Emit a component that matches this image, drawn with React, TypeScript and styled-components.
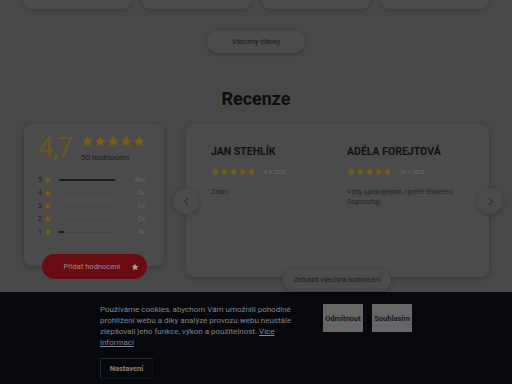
import React from 'react';
import styled, { createGlobalStyle } from 'styled-components';

const GlobalStyle = createGlobalStyle`
  body {
    margin: 0;
    background: #484848;
    font-family: Roboto, 'Liberation Sans', sans-serif;
  }
`;

const Page = styled.div`
  width: 512px;
  height: 384px;
  position: relative;
  overflow: hidden;
  background: #484848;
`;

const ArticleRow = styled.div`
  display: flex;
  gap: 11px;
  padding: 0 23px;
`;

const ArticleStub = styled.div`
  flex: 1;
  height: 9px;
  background: #4b4b4b;
  border-radius: 0 0 8px 8px;
  box-shadow: 0 1px 4px rgba(0, 0, 0, 0.22);
`;

const PillButton = styled.div`
  display: flex;
  align-items: center;
  justify-content: center;
  height: 23px;
  border-radius: 12px;
  background: #4b4b4b;
  box-shadow: 0 1px 4px rgba(0, 0, 0, 0.25);
  font-size: 7px;
  color: #1c1c1c;
`;

const AllArticles = styled(PillButton)`
  width: 98px;
  margin: 21px auto 0;
`;

const Heading = styled.h2`
  margin: 36px 0 0;
  text-align: center;
  font-size: 18px;
  font-weight: 700;
  line-height: 20px;
  color: #0e0e0e;
`;

const Reviews = styled.div`
  display: flex;
  gap: 22px;
  padding: 15px 0 0 24px;
`;

const SummaryCol = styled.div`
  width: 140px;
  display: flex;
  flex-direction: column;
  align-items: center;
`;

const Card = styled.div`
  background: #4b4b4b;
  border-radius: 8px;
  box-shadow: 0 1px 5px rgba(0, 0, 0, 0.25);
`;

const SummaryCard = styled(Card)`
  width: 100%;
  box-sizing: border-box;
  padding: 10px 19px 30px 14px;
`;

const Score = styled.div`
  display: flex;
  gap: 9px;
`;

const Big = styled.div`
  font-size: 28px;
  font-weight: 400;
  line-height: 28px;
  color: #6a5720;
  letter-spacing: -1px;
`;

const ScoreInfo = styled.div`
  display: flex;
  flex-direction: column;
  gap: 5px;
  padding-top: 1px;
`;

const Stars = styled.div<{ $size: number; $gap: number }>`
  display: flex;
  gap: ${p => p.$gap}px;
  svg {
    width: ${p => p.$size}px;
    height: ${p => p.$size}px;
  }
`;

const Count = styled.div`
  font-size: 8px;
  color: #1e1e1e;
`;

const RateList = styled.div`
  display: flex;
  flex-direction: column;
  gap: 5px;
  margin-top: 14px;
`;

const RateRow = styled.div`
  display: flex;
  align-items: center;
  height: 8px;
  font-size: 6.5px;
  color: #1a1a1a;
`;

const RateNum = styled.span`
  width: 6px;
`;

const RateStar = styled.span`
  display: flex;
  svg {
    width: 8px;
    height: 8px;
  }
`;

const Track = styled.div`
  width: 56px;
  height: 1px;
  margin-left: 7px;
  background: #434343;
`;

const Fill = styled.div`
  height: 2px;
  margin-top: -0.5px;
  background: #1c1c1c;
`;

const RateCount = styled.span`
  margin-left: auto;
  color: #6a6a6a;
`;

const AddButton = styled.div`
  width: 105px;
  height: 25px;
  margin-top: -12px;
  border-radius: 13px;
  background: #6a0b12;
  display: flex;
  align-items: center;
  justify-content: space-between;
  box-sizing: border-box;
  padding: 0 8px 0 22px;
  font-size: 7.5px;
  color: #a58a8a;
  svg {
    width: 8px;
    height: 8px;
  }
`;

const Carousel = styled(Card)`
  width: 303px;
  height: 153px;
  position: relative;
  display: flex;
  padding: 22px 0 0 25px;
  box-sizing: border-box;
`;

const Review = styled.div`
  width: 136px;
  display: flex;
  flex-direction: column;
`;

const Name = styled.div`
  font-size: 10.5px;
  font-weight: 700;
  color: #111;
  line-height: 12px;
`;

const Meta = styled.div`
  display: flex;
  align-items: center;
  gap: 8px;
  margin-top: 9px;
  font-size: 5.5px;
  color: #6e6e6e;
`;

const Body = styled.div`
  margin-top: 11px;
  font-size: 7px;
  line-height: 10px;
  color: #262626;
`;

const Arrow = styled.div<{ $side: 'left' | 'right' }>`
  position: absolute;
  top: 64px;
  ${p => (p.$side === 'left' ? 'left: -13px;' : 'right: -14px;')}
  width: 26px;
  height: 26px;
  border-radius: 50%;
  background: #4b4b4b;
  box-shadow: 0 1px 4px rgba(0, 0, 0, 0.25);
  display: flex;
  align-items: center;
  justify-content: center;
  svg {
    width: 11px;
    height: 11px;
  }
`;

const ShowAll = styled(PillButton)`
  position: absolute;
  bottom: -14px;
  left: 97px;
  width: 108px;
  height: 22px;
  border-radius: 11px;
`;

const CookieBar = styled.div`
  position: absolute;
  left: 0;
  right: 0;
  bottom: 0;
  height: 92px;
  background: #07070e;
  display: flex;
  padding: 12px 0 0 100px;
  box-sizing: border-box;
  gap: 23px;
  z-index: 2;
`;

const CookieText = styled.div`
  width: 200px;
  display: flex;
  flex-direction: column;
  align-items: flex-start;
`;

const CookieCopy = styled.p`
  margin: 0;
  font-size: 8px;
  line-height: 11px;
  color: #84848c;
`;

const MoreLink = styled.span`
  text-decoration: underline;
`;

const SettingsButton = styled.div`
  margin-top: 10px;
  width: 53px;
  height: 21px;
  border: 1px solid #26262c;
  border-right-color: #121218;
  border-bottom-color: #121218;
  box-sizing: border-box;
  display: flex;
  align-items: center;
  justify-content: center;
  font-size: 7.5px;
  font-weight: 700;
  color: #828288;
`;

const CookieActions = styled.div`
  display: flex;
  gap: 9px;
`;

const CookieButton = styled.div`
  width: 40px;
  height: 28px;
  background: #666;
  display: flex;
  align-items: center;
  justify-content: center;
  font-size: 7.5px;
  font-weight: 700;
  color: #1a1a1a;
  white-space: nowrap;
`;

const Star = ({ color = '#7a5c12' }: { color?: string }) => (
  <svg viewBox="0 0 24 24">
    <path
      fill={color}
      d="M12 1.8l3.1 6.6 7.2.9-5.3 5 1.4 7.1L12 17.9l-6.4 3.5 1.4-7.1-5.3-5 7.2-.9z"
    />
  </svg>
);

const Chevron = ({ dir }: { dir: 'left' | 'right' }) => (
  <svg viewBox="0 0 24 24" fill="none" stroke="#1c1c1c" strokeWidth="2" strokeLinecap="round" strokeLinejoin="round">
    <path d={dir === 'left' ? 'M15 5l-7 7 7 7' : 'M9 5l7 7-7 7'} />
  </svg>
);

const rates = [
  { n: 5, count: 46 },
  { n: 4, count: 0 },
  { n: 3, count: 0 },
  { n: 2, count: 0 },
  { n: 1, count: 4 },
];

const reviews = [
  { name: 'Jan Stehlík', date: '6.4.2025', text: ['Znám'] },
  {
    name: 'Adéla Forejtová',
    date: '29.1.2025',
    text: ['Vždy spokojenost, rychlé doručení', 'Doporučuji'],
  },
];

const FiveStars = ({ size, gap }: { size: number; gap: number }) => (
  <Stars $size={size} $gap={gap}>
    {[0, 1, 2, 3, 4].map(i => (
      <Star key={i} />
    ))}
  </Stars>
);

const App = () => {
  return (
    <Page>
      <GlobalStyle />
      <ArticleRow>
        <ArticleStub />
        <ArticleStub />
        <ArticleStub />
        <ArticleStub />
      </ArticleRow>
      <AllArticles>Všechny články</AllArticles>
      <Heading>Recenze</Heading>
      <Reviews>
        <SummaryCol>
          <SummaryCard>
            <Score>
              <Big>4,7</Big>
              <ScoreInfo>
                <FiveStars size={12.5} gap={0.5} />
                <Count>50 hodnocení</Count>
              </ScoreInfo>
            </Score>
            <RateList>
              {rates.map(r => (
                <RateRow key={r.n}>
                  <RateNum>{r.n}</RateNum>
                  <RateStar>
                    <Star />
                  </RateStar>
                  <Track>
                    <Fill style={{ width: `${(r.count / 46) * 100}%` }} />
                  </Track>
                  <RateCount>{r.count}x</RateCount>
                </RateRow>
              ))}
            </RateList>
          </SummaryCard>
          <AddButton>
            <span>Přidat hodnocení</span>
            <Star color="#a89a9a" />
          </AddButton>
        </SummaryCol>
        <Carousel>
          {reviews.map(r => (
            <Review key={r.name}>
              <Name>{r.name.toUpperCase()}</Name>
              <Meta>
                <FiveStars size={9} gap={0} />
                <span>{r.date}</span>
              </Meta>
              <Body>
                {r.text.map(t => (
                  <div key={t}>{t}</div>
                ))}
              </Body>
            </Review>
          ))}
          <Arrow $side="left">
            <Chevron dir="left" />
          </Arrow>
          <Arrow $side="right">
            <Chevron dir="right" />
          </Arrow>
          <ShowAll>Zobrazit všechna hodnocení</ShowAll>
        </Carousel>
      </Reviews>
      <CookieBar>
        <CookieText>
          <CookieCopy>
            Používáme cookies, abychom Vám umožnili pohodlné prohlížení webu a díky analýze
            provozu webu neustále zlepšovali jeho funkce, výkon a použitelnost.{' '}
            <MoreLink>Více informací</MoreLink>
          </CookieCopy>
          <SettingsButton>Nastavení</SettingsButton>
        </CookieText>
        <CookieActions>
          <CookieButton>Odmítnout</CookieButton>
          <CookieButton>Souhlasím</CookieButton>
        </CookieActions>
      </CookieBar>
    </Page>
  );
};

export default App;
